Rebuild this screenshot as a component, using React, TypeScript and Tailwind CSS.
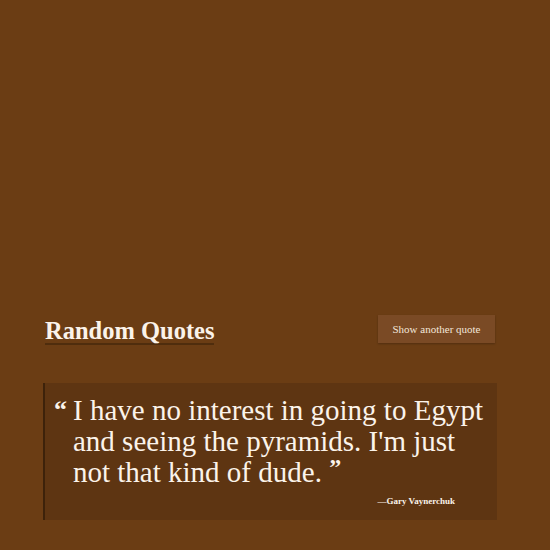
import React from 'react';

const quote = {
  text: "I have no interest in going to Egypt and seeing the pyramids. I'm just not that kind of dude.",
  author: 'Gary Vaynerchuk',
};

export default function App() {
  return (
    <div className="min-h-[550px] w-full bg-[#6b3d14] font-['Liberation_Serif',serif] text-[#fbf3ea]">
      <div className="ml-[43px] w-[454px] pt-[314px]">
        <div className="flex items-start justify-between">
          <h1 className="ml-[2px] mt-[5px] border-b-2 border-[#4f2d0d] pb-0 text-[24.5px] font-bold leading-[24px]">
            Random Quotes
          </h1>
          <button className="mr-[2px] mt-[1px] h-[28px] w-[117px] bg-[#7a4a25] text-[11px] text-[#f3e6da] shadow-[0_1px_2px_rgba(0,0,0,0.25)]">
            Show another quote
          </button>
        </div>

        <blockquote className="mt-[38px] border-l-2 border-[#3d220a] bg-[#5e3512] pb-[13px] pl-[9px] pr-[10px] pt-[12px]">
          <div className="flex items-start">
            <span className="mt-[2px] w-[19px] shrink-0 text-[26px] font-bold leading-[26px]">“</span>
            <p className="w-[420px] text-[29px] leading-[31px]">
              {quote.text}{' '}
              <span className="relative top-[-7px] text-[24px] font-bold">”</span>
            </p>
          </div>
          <p className="mt-[5px] pr-[32px] text-right text-[9px] font-bold leading-[12px]">—{quote.author}</p>
        </blockquote>
      </div>
    </div>
  );
}
